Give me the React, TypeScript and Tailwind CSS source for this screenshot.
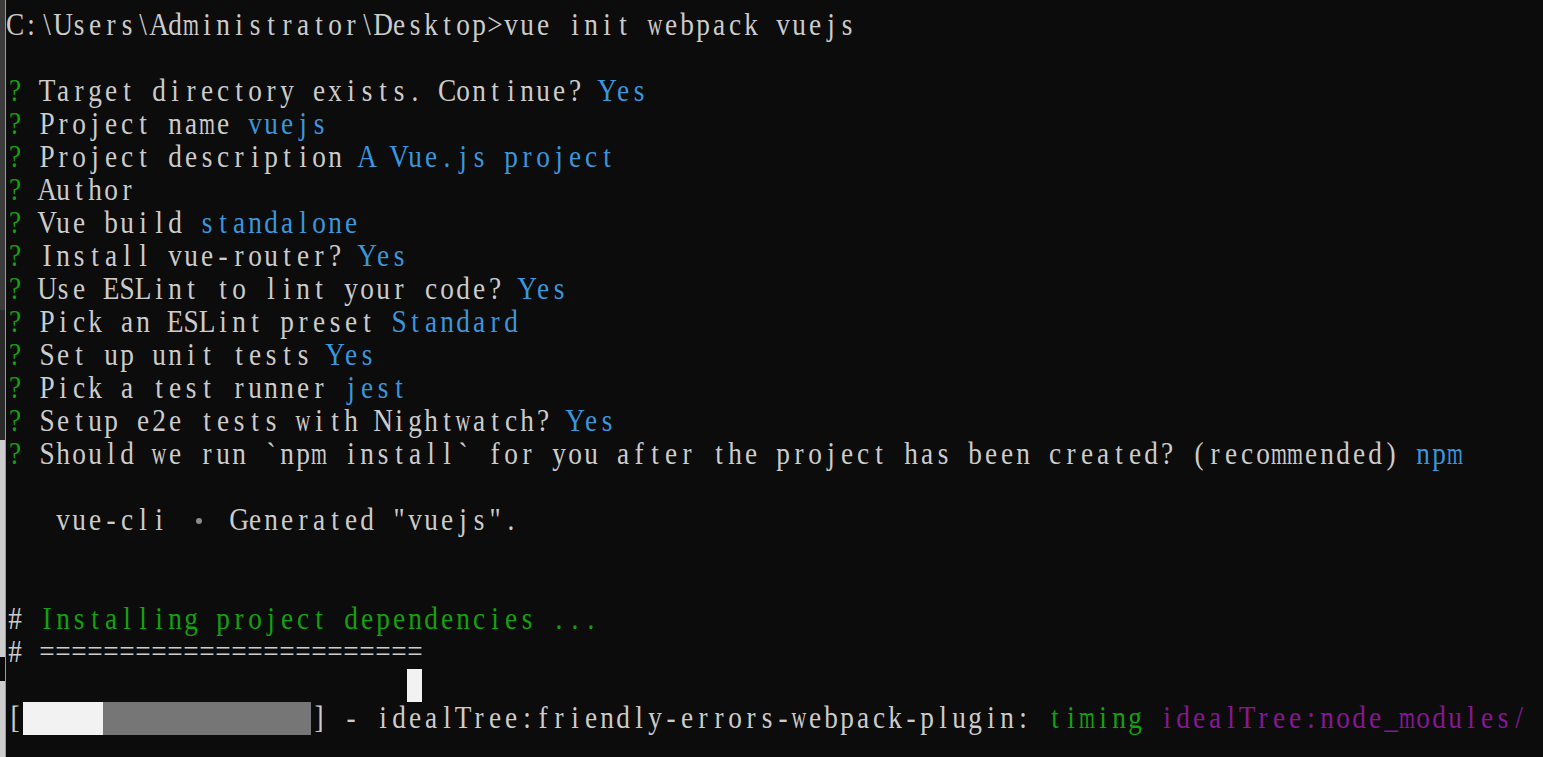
import React from "react";

const G = "text-[#13a10e]";
const B = "text-[#3a96dd]";
const M = "text-[#881798]";

type Seg = [string, string?];

const questions: Seg[][] = [
  [[" Target directory exists. Continue? "], ["Yes", B]],
  [[" Project name "], ["vuejs", B]],
  [[" Project description "], ["A Vue.js project", B]],
  [[" Author"]],
  [[" Vue build "], ["standalone", B]],
  [[" Install vue-router? "], ["Yes", B]],
  [[" Use ESLint to lint your code? "], ["Yes", B]],
  [[" Pick an ESLint preset "], ["Standard", B]],
  [[" Set up unit tests "], ["Yes", B]],
  [[" Pick a test runner "], ["jest", B]],
  [[" Setup e2e tests with Nightwatch? "], ["Yes", B]],
  [[" Should we run `npm install` for you after the project has been created? (recommended) "], ["npm", B]],
];

const wide = "mwMW";

// one console cell per character, 16px wide, like the console's fixed grid
function Cells({ text, className = "" }: { text: string; className?: string }) {
  return (
    <>
      {text.split("").map((ch, i) => (
        <span
          key={i}
          className={
            "inline-flex w-[16px] shrink-0 justify-center whitespace-pre " +
            (wide.includes(ch) ? "scale-x-[0.66] " : "scale-x-[0.88] ") +
            className
          }
        >
          {ch}
        </span>
      ))}
    </>
  );
}

function Line({ children }: { children?: React.ReactNode }) {
  return <div className="flex h-[33px] leading-[31px]">{children}</div>;
}

export default function App() {
  return (
    <div className="flex h-[757px] w-[1543px] overflow-hidden bg-[#0c0c0c]">
      {/* window edge behind the terminal */}
      <div className="flex w-[6px] shrink-0">
        <div className="flex w-[5px] flex-col">
          <div className="h-[310px] bg-[#3b3b3b]" />
          <div className="h-[130px] bg-[#2a2a2a]" />
          <div className="h-[217px] bg-[#cdcdcd]" />
          <div className="h-[24px] bg-[#0a0a0a]" />
          <div className="flex-1 bg-[#cdcdcd]" />
        </div>
        <div className="w-px bg-[#9a9a9a]" />
      </div>

      <div className="flex-1 pl-px pt-[9px] text-[31px] text-[#cccccc] [font-family:'Liberation_Serif','DejaVu_Serif',serif]">
        <Line>
          <Cells text={"C:\\Users\\Administrator\\Desktop>vue init webpack vuejs"} />
        </Line>
        <Line />
        {questions.map((q, i) => (
          <Line key={i}>
            <Cells text="?" className={G} />
            {q.map(([t, c], j) => (
              <Cells key={j} text={t} className={c ?? ""} />
            ))}
          </Line>
        ))}
        <Line />
        <Line>
          <Cells text="   vue-cli " />
          <span className="flex w-[32px] shrink-0 items-center justify-center">
            <span className="h-[6px] w-[6px] rounded-full bg-[#8c8c8c]" />
          </span>
          <Cells text={' Generated "vuejs".'} />
        </Line>
        <Line />
        <Line />
        <Line>
          <Cells text="#" />
          <Cells text=" Installing project dependencies ..." className={G} />
        </Line>
        <Line>
          <Cells text="# ========================" />
        </Line>
        <Line>
          <Cells text={" ".repeat(25)} />
          <span className="h-[33px] w-[15px] shrink-0 bg-[#f2f2f2]" />
        </Line>
        <Line>
          <Cells text="[" />
          <span className="h-[33px] w-[80px] shrink-0 bg-[#f2f2f2]" />
          <span className="h-[33px] w-[208px] shrink-0 bg-[#767676]" />
          <Cells text="] - idealTree:friendly-errors-webpack-plugin: " />
          <Cells text="timing" className={G} />
          <Cells text=" " />
          <Cells text="idealTree:node_modules/" className={M} />
        </Line>
      </div>
    </div>
  );
}
